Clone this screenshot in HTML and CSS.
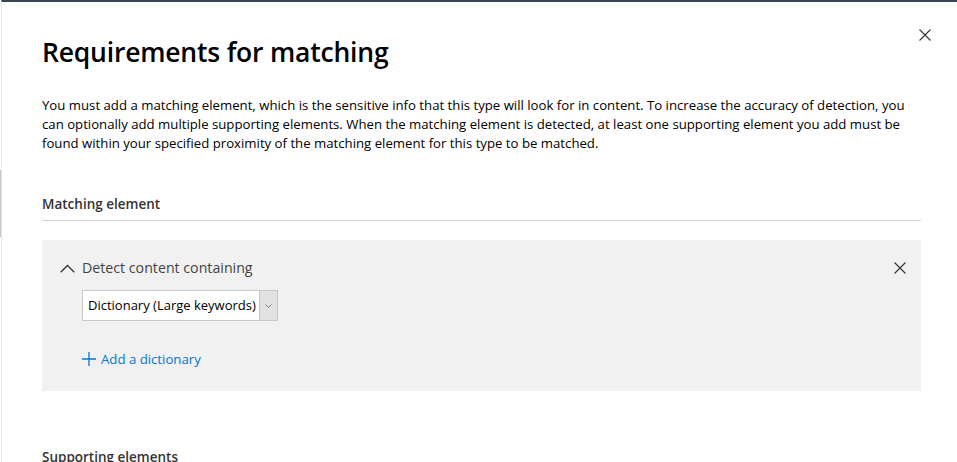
FILE: index.html
```html
<!DOCTYPE html>
<html lang="en">
<head>
<meta charset="utf-8">
<title>Requirements for matching</title>
<link rel="stylesheet" href="styles.css">
</head>
<body>
<div class="frame">
  <div class="scroll-thumb"></div>
  <div class="panel">
    <header class="header">
      <h1 class="title">Requirements for matching</h1>
      <button class="close" aria-label="Close">
        <svg width="12" height="12" viewBox="0 0 12 12"><path d="M0.5 0.5 L11.5 11.5 M11.5 0.5 L0.5 11.5" stroke="#333" stroke-width="1.1" fill="none"/></svg>
      </button>
    </header>
    <p class="intro">You must add a matching element, which is the sensitive info that this type will look for in content. To increase the accuracy of detection, you can optionally add multiple supporting elements. When the matching element is detected, at least one supporting element you add must be found within your specified proximity of the matching element for this type to be matched.</p>
    <h2 class="section-title">Matching element</h2>
    <div class="card">
      <div class="card-head">
        <svg class="chevron" width="15" height="9" viewBox="0 0 15 9"><path d="M0.7 8.3 L7.5 1.5 L14.3 8.3" stroke="#333" stroke-width="1.3" fill="none"/></svg>
        <span class="card-title">Detect content containing</span>
        <svg class="card-close" width="12" height="12" viewBox="0 0 12 12"><path d="M0.5 0.5 L11.5 11.5 M11.5 0.5 L0.5 11.5" stroke="#333" stroke-width="1.1" fill="none"/></svg>
      </div>
      <div class="card-body">
        <div class="select">
          <span class="select-value">Dictionary (Large keywords)</span>
          <span class="select-arrow"><svg width="7" height="4" viewBox="0 0 7 4"><path d="M0.5 0.5 L3.5 3.5 L6.5 0.5" stroke="#777" stroke-width="0.9" fill="none"/></svg></span>
        </div>
        <a class="add-link" href="#">
          <svg width="14" height="14" viewBox="0 0 14 14"><path d="M7 0 V14 M0 7 H14" stroke="#0078d4" stroke-width="1.3" fill="none"/></svg>
          <span>Add a dictionary</span>
        </a>
      </div>
    </div>
    <h2 class="section-title supporting">Supporting elements</h2>
  </div>
</div>
</body>
</html>
```
FILE: styles.css
```css
html, body {
  margin: 0;
  padding: 0;
  height: 100%;
  overflow: hidden;
  background: #fff;
}
body {
  font-family: "Open Sans", "Noto Sans", sans-serif;
  color: #000;
}
.frame {
  position: relative;
  height: 100%;
  box-sizing: border-box;
  border-top: 2px solid #3a4654;
  border-left: 1px solid #e3e3e3;
  margin-left: 1px;
}
.scroll-thumb {
  position: absolute;
  left: -2px;
  top: 168px;
  width: 1px;
  height: 67px;
  background: #c6c6c6;
}
.panel {
  padding: 0 36px 0 40px;
}
.header {
  display: flex;
  justify-content: space-between;
  align-items: flex-start;
}
.title {
  margin: 28px 0 0;
  font-size: 26.5px;
  font-weight: 600;
  line-height: 44px;
  letter-spacing: -0.2px;
  color: #000;
}
.close {
  margin: 27px -10px 0 0;
  padding: 0;
  border: 0;
  background: none;
  width: 12px;
  height: 12px;
  display: flex;
}
.intro {
  margin: 22px 0 0;
  font-size: 13.2px;
  line-height: 19px;
  color: #000;
}
.section-title {
  margin: 41px 0 0;
  padding-bottom: 6px;
  border-bottom: 1px solid #d4d4d4;
  font-size: 13.5px;
  font-weight: 600;
  line-height: 20px;
  color: #333;
}
.section-title.supporting {
  margin-top: 56px;
  border-bottom: 0;
}
.card {
  margin-top: 19px;
  background: #f1f1f1;
  height: 151px;
  box-sizing: border-box;
  padding: 17px 15px 0 18px;
}
.card-head {
  display: flex;
  align-items: center;
  height: 22px;
}
.chevron {
  margin-right: 7px;
}
.card-title {
  flex: 1;
  font-size: 14.2px;
  color: #444;
  line-height: 22px;
}
.card-body {
  padding-left: 22px;
}
.select {
  margin-top: 11px;
  display: inline-flex;
  height: 31px;
  box-sizing: border-box;
  border: 1px solid #c8c8c8;
  background: #fff;
}
.select-value {
  padding: 0 3px 0 5px;
  font-size: 13px;
  line-height: 29px;
  color: #000;
}
.select-arrow {
  width: 17px;
  background: #e2e2e2;
  border-left: 1px solid #c8c8c8;
  display: flex;
  align-items: center;
  justify-content: center;
}
.add-link {
  margin-top: 28px;
  display: flex;
  align-items: center;
  gap: 5px;
  color: #0078d4;
  text-decoration: none;
  font-size: 13.2px;
  line-height: 20px;
  width: max-content;
}
```
